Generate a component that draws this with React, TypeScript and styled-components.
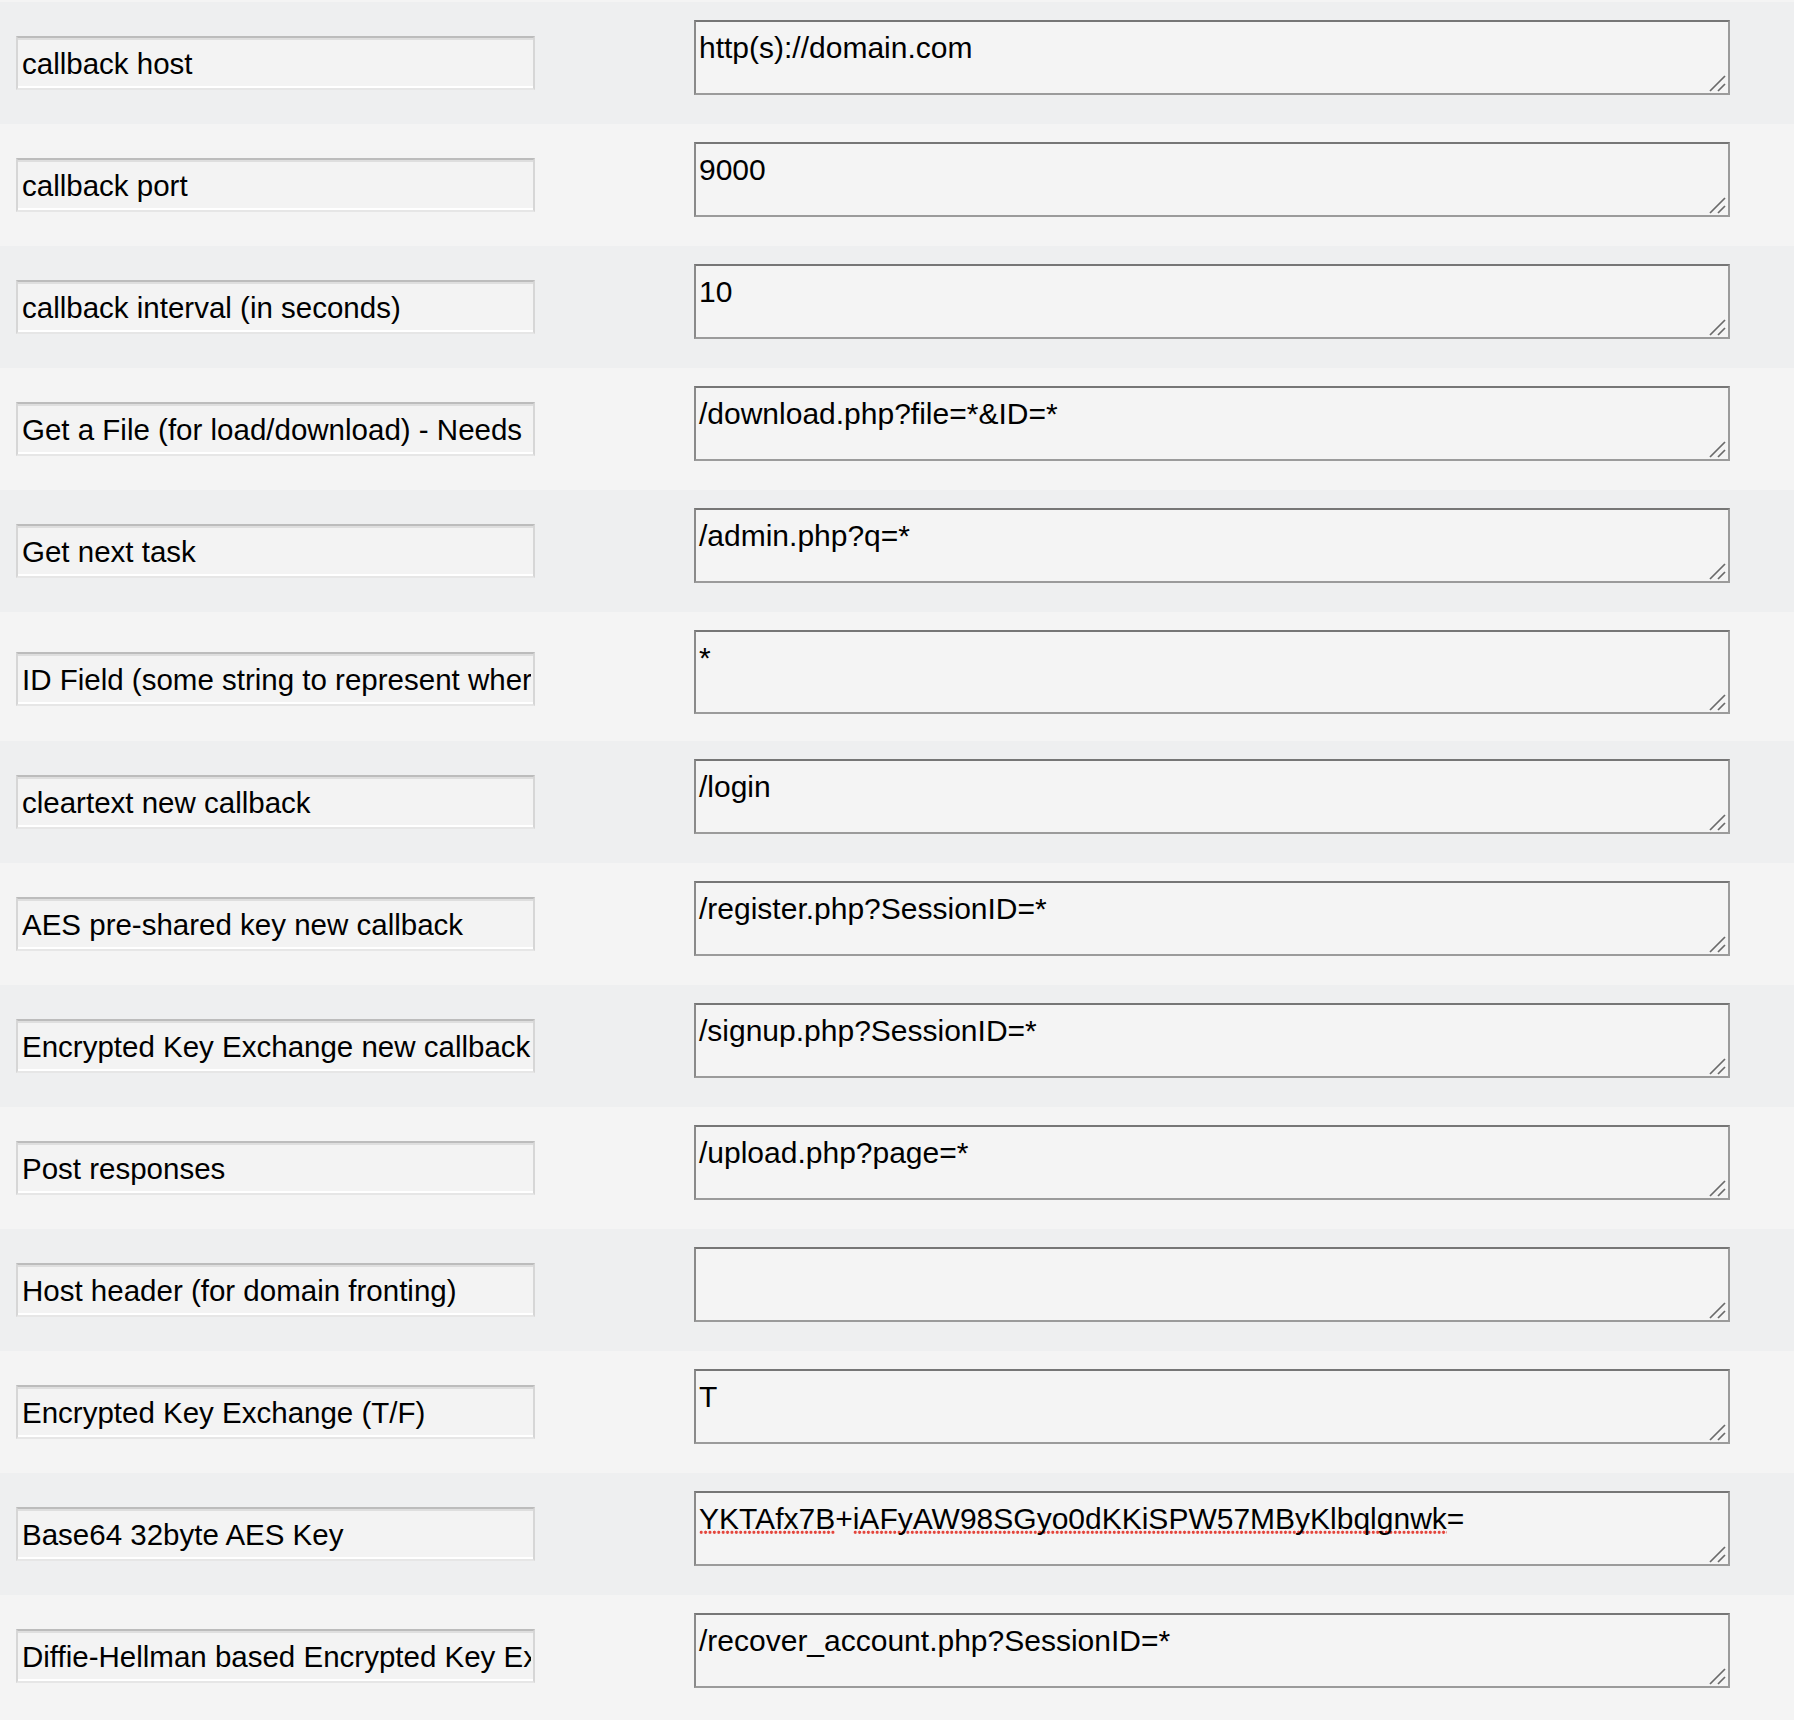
import React from "react";
import styled, { createGlobalStyle } from "styled-components";

const GlobalStyle = createGlobalStyle`
  html, body {
    margin: 0;
    padding: 0;
    background: #f4f4f4;
  }
  body {
    font-family: "Liberation Sans", Arial, Helvetica, sans-serif;
    color: #000;
  }
`;

const Page = styled.div`
  padding: 2px 0 3px;
  background: #f4f4f4;
  min-height: 1715px;
`;

const Row = styled.div<{ $odd: boolean }>`
  display: grid;
  grid-template-columns: 694px 1036px 1fr;
  background: ${(p) => (p.$odd ? "#eeeff0" : "#f4f4f4")};
`;

const LabelCell = styled.div<{ $shift: number }>`
  align-self: center;
  padding-left: 16px;
  margin-top: ${(p) => p.$shift}px;
`;

const LabelBox = styled.div`
  box-sizing: border-box;
  width: 519px;
  height: 54px;
  display: flex;
  align-items: center;
  padding: 2px 2px 0 4px;
  background: #f3f3f3;
  border: 2px solid;
  border-color: #bcbcbc #d6d6d6 #e6e6e6 #d6d6d6;
  box-shadow: inset 0 2px 0 #dedede, inset 0 -2px 0 #ffffff;
  font-size: 29.5px;
`;

const LabelText = styled.span`
  display: block;
  flex: 1;
  overflow: hidden;
  white-space: nowrap;
`;

const FieldCell = styled.div<{ $tall: boolean }>`
  padding: 18px 0 ${(p) => (p.$tall ? 27 : 29)}px;
`;

const FieldBox = styled.div<{ $tall: boolean }>`
  position: relative;
  box-sizing: border-box;
  width: 1036px;
  height: ${(p) => (p.$tall ? 84 : 75)}px;
  padding: 9px 3px 4px 3px;
  background: #f4f4f4;
  border: 2px solid;
  border-color: #767676 #9b9b9b #9b9b9b #8a8a8a;
  font-size: 30px;
  white-space: pre;
  overflow: hidden;
`;

const Misspelled = styled.span`
  background-image: radial-gradient(
    circle at 2.2px 2.2px,
    #e4453c 0,
    #e4453c 1.3px,
    rgba(228, 69, 60, 0) 1.9px
  );
  background-repeat: repeat-x;
  background-size: 4.4px 5px;
  background-position: 0 100%;
`;

const Grip = styled.svg`
  position: absolute;
  right: 1px;
  bottom: 1px;
  width: 18px;
  height: 18px;
`;

type Part = string | { bad: string };

type RowData = {
  label: string;
  value: Part[];
  tall?: boolean;
};

const rows: RowData[] = [
  { label: "callback host", value: ["http(s)://domain.com"] },
  { label: "callback port", value: ["9000"] },
  { label: "callback interval (in seconds)", value: ["10"] },
  {
    label: "Get a File (for load/download) - Needs a * for the file name",
    value: ["/download.php?file=*&ID=*"],
  },
  { label: "Get next task", value: ["/admin.php?q=*"] },
  {
    label: "ID Field (some string to represent where the ID goes)",
    value: ["*"],
    tall: true,
  },
  { label: "cleartext new callback", value: ["/login"] },
  { label: "AES pre-shared key new callback", value: ["/register.php?SessionID=*"] },
  { label: "Encrypted Key Exchange new callback", value: ["/signup.php?SessionID=*"] },
  { label: "Post responses", value: ["/upload.php?page=*"] },
  { label: "Host header (for domain fronting)", value: [""] },
  { label: "Encrypted Key Exchange (T/F)", value: ["T"] },
  {
    label: "Base64 32byte AES Key",
    value: [{ bad: "YKTAfx7B" }, "+", { bad: "iAFyAW98SGyo0dKKiSPW57MByKlbqlgnwk" }, "="],
  },
  {
    label: "Diffie-Hellman based Encrypted Key Exchange new callback",
    value: ["/recover_account.php?SessionID=*"],
  },
];

const ResizeGrip = () => (
  <Grip viewBox="0 0 18 18" aria-hidden="true">
    <line x1="1" y1="17" x2="16" y2="2" stroke="#6a6a6a" strokeWidth="1.7" />
    <line x1="9" y1="17" x2="16" y2="10" stroke="#6a6a6a" strokeWidth="1.7" />
  </Grip>
);

export default function App() {
  return (
    <>
      <GlobalStyle />
      <Page>
        {rows.map((r, i) => (
          <Row key={r.label} $odd={i % 2 === 0}>
            <LabelCell $shift={r.tall ? 4 : 0}>
              <LabelBox>
                <LabelText>{r.label}</LabelText>
              </LabelBox>
            </LabelCell>
            <FieldCell $tall={!!r.tall}>
              <FieldBox $tall={!!r.tall}>
                {r.value.map((p, j) =>
                  typeof p === "string" ? (
                    <React.Fragment key={j}>{p}</React.Fragment>
                  ) : (
                    <Misspelled key={j}>{p.bad}</Misspelled>
                  )
                )}
                <ResizeGrip />
              </FieldBox>
            </FieldCell>
            <div />
          </Row>
        ))}
      </Page>
    </>
  );
}
